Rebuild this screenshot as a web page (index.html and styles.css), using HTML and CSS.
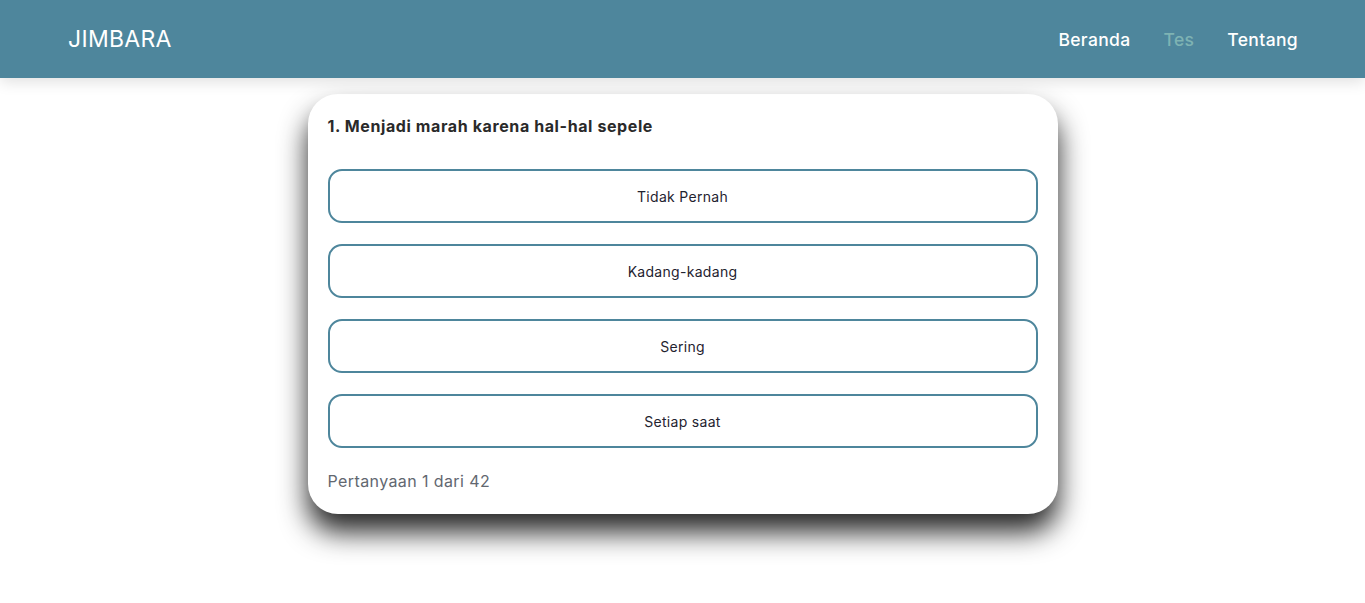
FILE: index.html
```html
<!DOCTYPE html>
<html lang="id">
<head>
<meta charset="utf-8">
<title>JIMBARA</title>
<link rel="stylesheet" href="styles.css">
</head>
<body>
<header class="navbar">
  <div class="brand">JIMBARA</div>
  <nav class="nav">
    <a class="nav-link" href="#">Beranda</a>
    <a class="nav-link active" href="#">Tes</a>
    <a class="nav-link" href="#">Tentang</a>
  </nav>
</header>
<main class="main">
  <section class="card">
    <h3 class="question">1. Menjadi marah karena hal-hal sepele</h3>
    <div class="options">
      <button class="option">Tidak Pernah</button>
      <button class="option">Kadang-kadang</button>
      <button class="option">Sering</button>
      <button class="option">Setiap saat</button>
    </div>
    <p class="progress">Pertanyaan 1 dari 42</p>
  </section>
</main>
</body>
</html>
```
FILE: styles.css
```css
* { box-sizing: border-box; }
html, body { min-height: 100%; }
body {
  margin: 0;
  min-height: 603px;
  font-family: Inter, "Open Sans", sans-serif;
  background: #fff;
  color: #222;
}
.navbar {
  height: 78px;
  background: #4e869c;
  display: flex;
  align-items: center;
  justify-content: space-between;
  padding: 0 67px 0 68px;
  box-shadow: 0 4px 14px rgba(0,0,0,0.12);
  position: relative;
  z-index: 1;
}
.brand {
  color: #fff;
  font-size: 23px;
  font-weight: 400;
  letter-spacing: 0.3px;
}
.nav {
  display: flex;
  gap: 33px;
}
.nav-link {
  color: #fff;
  text-decoration: none;
  font-size: 17.5px;
  font-weight: 500;
  letter-spacing: 0.35px;
}
.nav-link.active { color: #7eb3b3; }
.main {
  display: flex;
  justify-content: center;
  padding: 16px 0 60px;
}
.card {
  width: 750px;
  background: #fff;
  border-radius: 30px;
  padding: 20px 20px 21px;
  box-shadow: 0 18px 28px rgba(0,0,0,0.85);
}
.question {
  margin: 0 0 31px;
  font-size: 16px;
  line-height: 24px;
  font-weight: 700;
  letter-spacing: 0.6px;
  color: #2a2a2a;
}
.options {
  display: flex;
  flex-direction: column;
  gap: 21px;
}
.option {
  height: 54px;
  border: 2px solid #4e869c;
  border-radius: 14px;
  background: #fff;
  font-family: inherit;
  font-size: 14px;
  letter-spacing: 0.3px;
  color: #1f2330;
}
.progress {
  margin: 21px 0 0;
  font-size: 16px;
  line-height: 24px;
  letter-spacing: 0.4px;
  color: #626770;
}
```
